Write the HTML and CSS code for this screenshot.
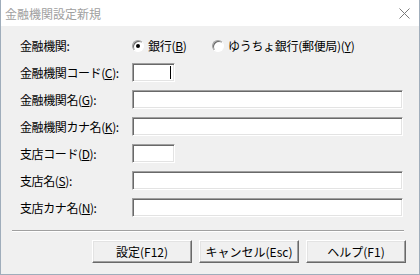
FILE: index.html
```html
<!DOCTYPE html>
<html lang="ja">
<head>
    <meta charset="UTF-8">
    <title>金融機関設定新規</title>
    <link rel="stylesheet" href="styles.css">
</head>
<body>
    <div class="window">
        <div class="titlebar">
            <span class="title">金融機関設定新規</span>
            <svg class="close" width="11" height="11" viewBox="0 0 11 11">
                <path d="M0.5 0.5 L10.5 10.5 M10.5 0.5 L0.5 10.5" stroke="#7a7a7a" stroke-width="1" fill="none"/>
            </svg>
        </div>

        <div class="client">
            <div class="form">
                <div class="label">金融機関:</div>
                <div class="radios">
                    <label class="radio"><span class="dot checked"></span><span>銀行(<u>B</u>)</span></label>
                    <label class="radio"><span class="dot"></span><span>ゆうちょ銀行(郵便局)(<u>Y</u>)</span></label>
                </div>

                <div class="label">金融機関コード(<u>C</u>):</div>
                <div class="field short"><span class="caret"></span></div>

                <div class="label">金融機関名(<u>G</u>):</div>
                <div class="field"></div>

                <div class="label">金融機関カナ名(<u>K</u>):</div>
                <div class="field"></div>

                <div class="label">支店コード(<u>D</u>):</div>
                <div class="field short"></div>

                <div class="label">支店名(<u>S</u>):</div>
                <div class="field"></div>

                <div class="label">支店カナ名(<u>N</u>):</div>
                <div class="field"></div>
            </div>

            <div class="sep"></div>

            <div class="buttons">
                <button class="btn">設定(F12)</button>
                <button class="btn">キャンセル(Esc)</button>
                <button class="btn">ヘルプ(F1)</button>
            </div>
        </div>
    </div>
</body>
</html>
```

FILE: styles.css
```css
* {
    box-sizing: border-box;
}

body {
    margin: 0;
    font-family: "Noto Sans CJK JP", "Noto Sans", sans-serif;
    font-size: 12px;
    color: #000;
    background: #f0f0f0;
}

.window {
    width: 420px;
    height: 275px;
    display: flex;
    flex-direction: column;
    background: #f0f0f0;
    border: 1px solid #9fadbb;
    border-top: none;
}

.titlebar {
    height: 26px;
    flex: none;
    display: flex;
    align-items: center;
    justify-content: space-between;
    padding: 0 9px 0 4px;
    background: #fff;
    color: #a0a0a0;
}

.close {
    display: block;
    margin-top: 1px;
}

.client {
    padding: 6px 0 0 19px;
}

.form {
    display: grid;
    grid-template-columns: 112px auto;
    grid-auto-rows: 27px;
    align-items: center;
}

.label {
    white-space: nowrap;
    letter-spacing: -0.4px;
}

.radios {
    display: flex;
    align-items: center;
    letter-spacing: -0.3px;
}

.radio {
    display: flex;
    align-items: center;
    gap: 4px;
    white-space: nowrap;
}

.radio:first-child {
    width: 80px;
}

.dot {
    flex: none;
    width: 12px;
    height: 12px;
    border-radius: 50%;
    background: #fff;
    border: 1px solid;
    border-color: #a0a0a0 #fff #fff #a0a0a0;
    box-shadow: inset 1px 1px 0 #696969;
    display: flex;
    align-items: center;
    justify-content: center;
}

.dot.checked::after {
    content: "";
    width: 4px;
    height: 4px;
    border-radius: 50%;
    background: #000;
}

.field {
    width: 271px;
    height: 19px;
    background: #fff;
    border: 1px solid;
    border-color: #a0a0a0 #fff #fff #a0a0a0;
    box-shadow: inset 1px 1px 0 #696969, inset -1px -1px 0 #e3e3e3;
    display: flex;
    align-items: center;
    justify-content: flex-end;
    padding-right: 3px;
}

.field.short {
    width: 43px;
}

.caret {
    width: 1px;
    height: 13px;
    background: #000;
}

.sep {
    margin: 9px 0 0 -8px;
    width: 392px;
    border-top: 1px solid #a0a0a0;
    border-bottom: 1px solid #fff;
}

.buttons {
    display: flex;
    gap: 7px;
    margin: 8px 0 0 72px;
}

.btn {
    width: 100px;
    height: 23px;
    padding: 0;
    font: inherit;
    color: #000;
    background: #f0f0f0;
    border: 1px solid;
    border-color: #fff #696969 #696969 #fff;
    box-shadow: inset -1px -1px 0 #a0a0a0, inset 1px 1px 0 #e3e3e3;
}
```
